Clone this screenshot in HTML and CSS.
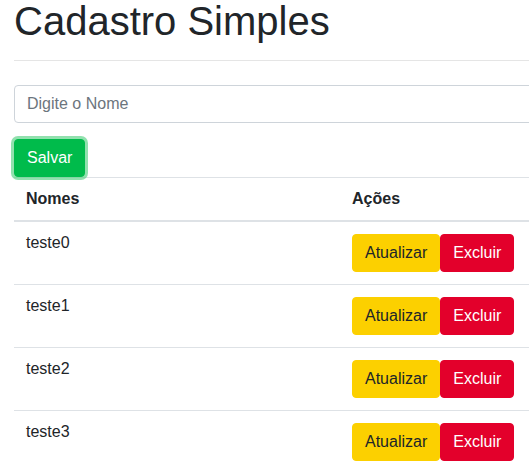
FILE: index.html
```html
<!DOCTYPE html>
<html lang="pt-BR">
<head>
<meta charset="utf-8">
<title>Cadastro Simples</title>
<link rel="stylesheet" href="styles.css">
</head>
<body>
<div class="container">
  <h1 class="title">Cadastro Simples</h1>
  <hr class="divider">
  <form class="form">
    <input class="input" type="text" placeholder="Digite o Nome">
    <button type="button" class="btn btn-success focus">Salvar</button>
  </form>
  <table class="table">
    <thead>
      <tr><th class="col-name">Nomes</th><th>Ações</th></tr>
    </thead>
    <tbody>
      <tr><td>teste0</td><td><button class="btn btn-warning">Atualizar</button><button class="btn btn-danger">Excluir</button></td></tr>
      <tr><td>teste1</td><td><button class="btn btn-warning">Atualizar</button><button class="btn btn-danger">Excluir</button></td></tr>
      <tr><td>teste2</td><td><button class="btn btn-warning">Atualizar</button><button class="btn btn-danger">Excluir</button></td></tr>
      <tr><td>teste3</td><td><button class="btn btn-warning">Atualizar</button><button class="btn btn-danger">Excluir</button></td></tr>
    </tbody>
  </table>
</div>
</body>
</html>
```
FILE: styles.css
```css
html, body {
  margin: 0;
  overflow: hidden;
  background: #fff;
}
body {
  font-family: "Liberation Sans", Arial, sans-serif;
  font-size: 16px;
  color: #212529;
}
.container {
  width: 900px;
  padding-left: 14px;
}
.title {
  margin: 0;
  font-size: 40px;
  font-weight: 400;
  line-height: 42px;
  color: #212529;
}
.divider {
  margin: 18px 0 24px;
  border: 0;
  border-top: 1px solid rgba(0, 0, 0, 0.1);
  height: 0;
}
.form {
  display: flex;
  flex-direction: column;
  align-items: flex-start;
  gap: 16px;
}
.input {
  box-sizing: border-box;
  width: 100%;
  height: 38px;
  padding: 6px 12px;
  font-family: inherit;
  font-size: 16px;
  color: #495057;
  border: 1px solid #ced4da;
  border-radius: 4px;
  outline: none;
}
.input::placeholder {
  color: #6c757d;
}
.btn {
  box-sizing: border-box;
  height: 38px;
  padding: 6px 12px;
  font-family: inherit;
  font-size: 16px;
  line-height: 24px;
  border: 1px solid transparent;
  border-radius: 4px;
  cursor: pointer;
  vertical-align: middle;
}
.btn-success {
  background: #00bb4b;
  border-color: #00bb4b;
  color: #fff;
}
.focus {
  box-shadow: 0 0 0 3px rgba(72, 205, 120, 0.6);
}
.btn-warning {
  background: #fcd000;
  border-color: #fcd000;
  color: #212529;
}
.btn-danger {
  background: #e3002b;
  border-color: #e3002b;
  color: #fff;
}
.table {
  width: 100%;
  border-collapse: collapse;
}
.table th,
.table td {
  padding: 12px;
  line-height: 18px;
  text-align: left;
  vertical-align: top;
  border-top: 1px solid #dee2e6;
}
.table th {
  font-weight: 700;
}
.table thead th {
  border-bottom: 2px solid #dee2e6;
}
.col-name {
  width: 302px;
}
```
